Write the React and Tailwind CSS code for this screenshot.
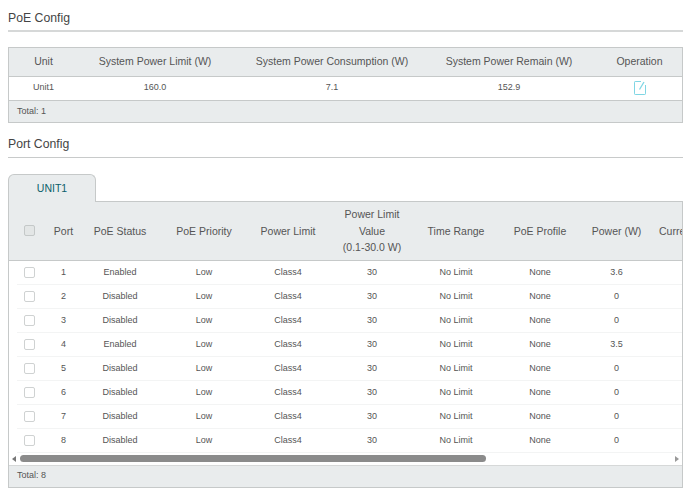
const rows = [
  ["1", "Enabled", "3.6"],
  ["2", "Disabled", "0"],
  ["3", "Disabled", "0"],
  ["4", "Enabled", "3.5"],
  ["5", "Disabled", "0"],
  ["6", "Disabled", "0"],
  ["7", "Disabled", "0"],
  ["8", "Disabled", "0"],
];

function Box({ head }) {
  return (
    <span
      className={
        head
          ? "block mx-auto w-[9px] h-[9px] box-content border border-[#c4c8c8] rounded-[2px] bg-[#e3e6e6]"
          : "block mx-auto w-[9px] h-[9px] box-content border border-[#cfd2d2] rounded-[2px] bg-white"
      }
    />
  );
}

function Title({ children, thin }) {
  return (
    <div
      className={
        thin
          ? "h-[32px] border-b border-[#c8caca] text-[12.25px] leading-[36px] text-[#444]"
          : "h-[32px] border-b-2 border-[#d6d8d8] text-[12.25px] leading-[36px] text-[#444]"
      }
    >
      {children}
    </div>
  );
}

function Edit() {
  return (
    <svg width="12" height="14" viewBox="0 0 12 14" fill="none" className="inline-block align-middle" stroke="#7fd6e4" strokeWidth="1">
      <path d="M7 .5H1.2a.7.7 0 0 0-.7.7v11.6a.7.7 0 0 0 .7.7h9.6a.7.7 0 0 0 .7-.7V4" />
      <path d="M5.5 8.5L10 1" strokeWidth="1.3" />
    </svg>
  );
}

const cell = "relative after:absolute after:left-0 after:right-0 after:bottom-0 after:h-px after:bg-[#f3f4f4]";

export default function App() {
  return (
    <div className="w-[690px] h-[494px] overflow-hidden bg-white pl-2 pr-[7px] font-['Liberation_Sans',Arial,sans-serif] text-[#555]">
      <Title>PoE Config</Title>

      <div className="mt-[15px] border border-[#c6c9c9]">
        <table className="w-full table-fixed border-collapse text-center">
          <colgroup>
            <col className="w-[69px]" />
            <col className="w-[154px]" />
            <col className="w-[200px]" />
            <col className="w-[154px]" />
            <col />
          </colgroup>
          <thead>
            <tr className="h-[28px] bg-[#e9eced] text-[10.5px] border-b border-[#c6c9c9]">
              <th className="font-normal">Unit</th>
              <th className="font-normal">System Power Limit (W)</th>
              <th className="font-normal">System Power Consumption (W)</th>
              <th className="font-normal">System Power Remain (W)</th>
              <th className="font-normal pl-[11px]">Operation</th>
            </tr>
          </thead>
          <tbody>
            <tr className="h-[24px] text-[9px] border-b border-[#c6c9c9]">
              <td>Unit1</td>
              <td>160.0</td>
              <td>7.1</td>
              <td>152.9</td>
              <td className="pl-[11px]"><Edit /></td>
            </tr>
          </tbody>
        </table>
        <div className="h-[21px] bg-[#e9eced] pl-2 text-[9px] leading-[21px]">Total: 1</div>
      </div>

      <div className="mt-[3px]">
        <Title thin>Port Config</Title>
      </div>

      <div className="mt-[16px] flex">
        <div className="w-[88px] h-[28px] relative z-10 -mb-px bg-[#e9eced] border border-b-0 border-[#c6c9c9] rounded-t-[6px] text-center text-[10.5px] leading-[26px] text-[#0b5f6b]">
          UNIT1
        </div>
      </div>

      <div className="border border-[#c6c9c9]">
        <div className="overflow-hidden">
          <table className="w-[740px] table-fixed border-collapse text-center">
            <colgroup>
              <col className="w-[40px]" />
              <col className="w-[29px]" />
              <col className="w-[84px]" />
              <col className="w-[84px]" />
              <col className="w-[84px]" />
              <col className="w-[84px]" />
              <col className="w-[84px]" />
              <col className="w-[84px]" />
              <col className="w-[69px]" />
              <col className="w-[98px]" />
            </colgroup>
            <thead>
              <tr className="h-[59px] bg-[#e9eced] text-[10.5px] leading-[16.5px] border-b border-[#c6c9c9]">
                <th className="font-normal"><Box head /></th>
                <th className="font-normal">Port</th>
                <th className="font-normal">PoE Status</th>
                <th className="font-normal">PoE Priority</th>
                <th className="font-normal">Power Limit</th>
                <th className="font-normal">Power Limit<br />Value<br />(0.1-30.0 W)</th>
                <th className="font-normal">Time Range</th>
                <th className="font-normal">PoE Profile</th>
                <th className="font-normal">Power (W)</th>
                <th className="font-normal text-left pl-[8px]">Current (mA)</th>
              </tr>
            </thead>
            <tbody className="text-[9px]">
              {rows.map(([port, status, power]) => (
                <tr key={port} className="h-[24px]">
                  <td className="relative after:absolute after:left-2 after:right-0 after:bottom-0 after:h-px after:bg-[#f3f4f4]"><Box /></td>
                  <td className={cell}>{port}</td>
                  <td className={cell}>{status}</td>
                  <td className={cell}>Low</td>
                  <td className={cell}>Class4</td>
                  <td className={cell}>30</td>
                  <td className={cell}>No Limit</td>
                  <td className={cell}>None</td>
                  <td className={cell}>{power}</td>
                  <td className={cell} />
                </tr>
              ))}
            </tbody>
          </table>
        </div>
        <div className="h-[12px] flex items-center px-[3px]">
          <span className="w-0 h-0 border-y-[3px] border-y-transparent border-r-[4px] border-r-[#777]" />
          <span className="ml-[4px] w-[466px] h-[7px] rounded-full bg-[#8b8b8b]" />
          <span className="ml-auto w-0 h-0 border-y-[3px] border-y-transparent border-l-[4px] border-l-[#999]" />
        </div>
        <div className="h-[22px] bg-[#e9eced] border-t border-[#d6d8d8] pl-2 text-[9px] leading-[19px]">Total: 8</div>
      </div>
    </div>
  );
}
